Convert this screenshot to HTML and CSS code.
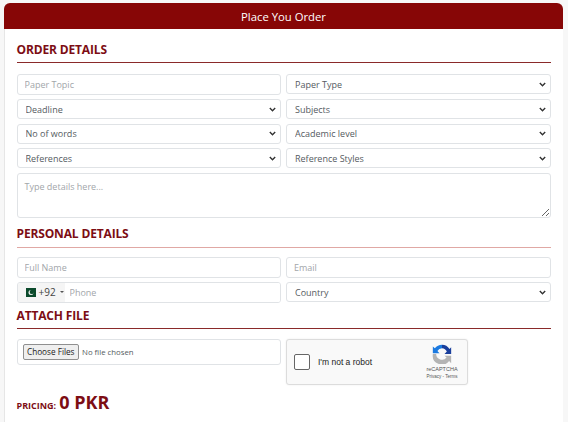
FILE: index.html
```html
<!DOCTYPE html>
<html lang="en">
<head>
<meta charset="utf-8">
<title>Place You Order</title>
<link rel="stylesheet" href="styles.css">
</head>
<body>
<main class="card">
  <header class="card-head">Place You Order</header>
  <form class="card-body">
    <h2 class="section first">ORDER DETAILS</h2>
    <div class="grid">
      <input class="field tall" type="text" placeholder="Paper Topic">
      <select class="field"><option>Paper Type</option></select>
      <select class="field"><option>Deadline</option></select>
      <select class="field"><option>Subjects</option></select>
      <select class="field"><option>No of words</option></select>
      <select class="field"><option>Academic level</option></select>
      <select class="field"><option>References</option></select>
      <select class="field"><option>Reference Styles</option></select>
      <textarea class="field area" placeholder="Type details here..."></textarea>
    </div>
    <h2 class="section pale">PERSONAL DETAILS</h2>
    <div class="grid">
      <input class="field tall" type="text" placeholder="Full Name">
      <input class="field tall" type="text" placeholder="Email">
      <div class="field tall phone">
        <span class="dial">
          <svg class="flag" width="10" height="9" viewBox="0 0 10 9" aria-hidden="true">
            <rect width="10" height="9" fill="#0b4a2c"/>
            <circle cx="5" cy="4.500" r="2.500" fill="#f2f2f2"/>
            <circle cx="5.900" cy="3.900" r="2.200" fill="#0b4a2c"/>
          </svg>
          <span>+92</span><i class="caret"></i>
        </span>
        <input class="phone-input" type="text" placeholder="Phone">
      </div>
      <select class="field"><option>Country</option></select>
    </div>
    <h2 class="section attach">ATTACH FILE</h2>
    <div class="grid top">
      <div class="field filebox">
        <span class="file-btn">Choose Files</span><span class="file-name">No file chosen</span>
      </div>
      <div class="captcha">
        <span class="tick"></span>
        <span class="robot">I'm not a robot</span>
        <div class="brand">
          <svg width="20" height="20" viewBox="0 0 24 24" aria-hidden="true">
            <path d="M12 1a11 11 0 0 0-8.600 4.200L1 3v8h8L6.500 8.300A7 7 0 0 1 12 5z" fill="#1c7ae0"/>
            <path d="M12 1a11 11 0 0 1 9 5l2-2v8h-8l2.800-3A7 7 0 0 0 12 5z" fill="#1a3f9c"/>
            <path d="M1 12h4a7 7 0 0 0 12.500 4.200L15 14h8v9l-2.500-2.500A11 11 0 0 1 1 12z" fill="#b4b4b4"/>
          </svg>
          <span class="brand-name">reCAPTCHA</span>
          <span class="brand-links">Privacy - Terms</span>
        </div>
      </div>
    </div>
    <p class="pricing"><span class="price-label">PRICING:</span> <strong class="price">0 PKR</strong></p>
  </form>
</main>
</body>
</html>
```
FILE: styles.css
```css
* { box-sizing: border-box; }
html, body { margin: 0; height: 100%; overflow: hidden; }
body {
  background: #f7f7f7;
  font-family: "Open Sans", "Noto Sans", sans-serif;
  color: #495057;
  padding: 3px 5px 0 4px;
}
.card {
  background: #fff;
  height: 419px;
  border-radius: 6px 6px 0 0;
  border-left: 1px solid #e6e6e6;
}
.card-head {
  height: 26px;
  background: #870606;
  color: #fff;
  font-size: 11.300px;
  line-height: 27px;
  text-align: center;
  border-radius: 6px 6px 0 0;
  margin-left: -1px;
}
.card-body { padding: 0 12px 0 11.500px; }
.section {
  margin: 0;
  font-family: "Open Sans", sans-serif;
  font-size: 12px;
  font-weight: 700;
  color: #7d0d14;
  letter-spacing: -0.15px;
  border-bottom: 1px solid #8a2a2a;
  height: 26px;
  line-height: 23px;
  margin-bottom: 10px;
}
.first { margin-top: 8px; height: 26px; line-height: 25px; margin-bottom: 11px; }
.pale { margin-top: 4px; height: 26px; line-height: 24px; border-bottom-color: #e0a8a4; margin-bottom: 9.500px; }
.attach { margin-top: 2.500px; height: 24px; line-height: 22px; margin-bottom: 9.500px; }
.grid {
  display: grid;
  grid-template-columns: 264.500px 265px;
  column-gap: 5px;
  row-gap: 4.500px;
}
.top { align-items: start; }
.field {
  height: 20px;
  width: 100%;
  margin: 0;
  background: #fff;
  border: 1px solid #e0e3e6;
  border-radius: 3px;
  font-family: "Open Sans", sans-serif;
  font-size: 9px;
  color: #555b61;
  padding: 0 7px;
  outline: none;
}
select.field {
  appearance: none;
  padding-left: 8px;
  background-image: url("data:image/svg+xml,%3Csvg xmlns='http://www.w3.org/2000/svg' width='7' height='5' viewBox='0 0 7 5'%3E%3Cpath d='M.8 1l2.700 2.700L6.200 1' fill='none' stroke='%23333' stroke-width='1.400'/%3E%3C/svg%3E");
  background-repeat: no-repeat;
  background-position: right 4px center;
}
.tall { height: 20.500px; }
.field::placeholder, .phone-input::placeholder { color: #a2a6aa; opacity: 1; }
.area {
  grid-column: 1 / -1;
  height: 45px;
  padding: 6px 7px;
  resize: vertical;
}
.phone { display: flex; padding: 0; overflow: hidden; align-items: stretch; }
.dial {
  display: flex;
  align-items: center;
  width: 47px;
  background: #f5f5f5;
  padding-left: 8px;
  font-size: 10px;
  color: #444;
  flex: none;
}
.flag { margin-right: 3px; flex: none; }
.caret {
  width: 0; height: 0;
  margin-left: 4px;
  border: 2px solid transparent;
  border-top: 2px solid #555;
  border-bottom: 0;
}
.phone-input {
  flex: 1;
  min-width: 0;
  border: 0;
  outline: none;
  padding: 0 5px;
  font-family: "Open Sans", sans-serif;
  font-size: 9px;
}
.filebox {
  height: 26px;
  display: flex;
  align-items: center;
  padding: 0 5px;
}
.file-btn {
  display: block;
  height: 16px;
  line-height: 14px;
  padding: 0 3.500px;
  border: 1px solid #8f8f8f;
  border-radius: 2px;
  background: #efefef;
  color: #222;
  font-family: "Open Sans", sans-serif;
  font-size: 8.200px;
}
.file-name { margin-left: 3px; font-family: "Open Sans", sans-serif; font-size: 7.800px; }
.captcha {
  height: 46px;
  width: 182px;
  display: flex;
  align-items: center;
  background: #f9f9f9;
  border: 1px solid #dcdcdc;
  border-radius: 3px;
  box-shadow: 0 0 2px rgba(0,0,0,.08);
  padding: 0 7px;
}
.tick {
  width: 16px; height: 16px;
  background: #fff;
  border: 1px solid #666;
  border-radius: 2px;
  flex: none;
}
.robot {
  margin-left: 8px;
  font-family: "Liberation Sans", sans-serif;
  font-size: 8.500px;
  color: #222;
}
.brand {
  margin-left: auto;
  display: flex;
  flex-direction: column;
  align-items: center;
  font-family: "Liberation Sans", sans-serif;
  color: #555;
  width: 36px;
}
.brand-name { font-size: 5.500px; line-height: 7px; margin-top: 2px; white-space: nowrap; }
.brand-links { font-size: 4.500px; line-height: 7px; white-space: nowrap; }
.pricing { margin: 7px 0 0; color: #7d0d14; font-weight: 700; line-height: 20px; word-spacing: -1px; }
.price-label { font-size: 9px; }
.price { font-size: 18px; font-weight: 700; word-spacing: 0; }
```
